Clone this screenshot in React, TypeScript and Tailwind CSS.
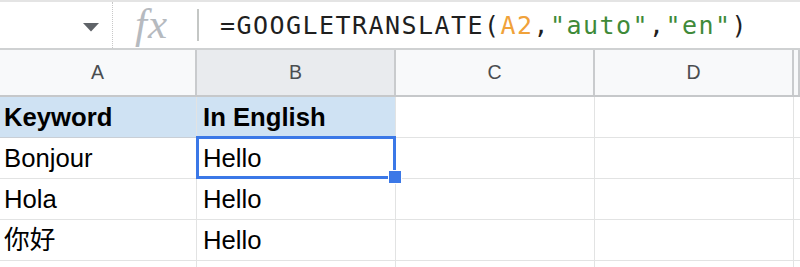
import React from "react";

const sans = { fontFamily: '"Liberation Sans", Arial, "Noto Sans CJK SC", sans-serif' };

export default function App() {
  const cols = ["w-[197px]", "w-[199px]", "w-[199px]", "w-[199px]", "flex-1"];
  const rows: { a: string; b: string; head?: boolean; sel?: boolean }[] = [
    { a: "Keyword", b: "In English", head: true },
    { a: "Bonjour", b: "Hello", sel: true },
    { a: "Hola", b: "Hello" },
    { a: "你好", b: "Hello" },
    { a: "", b: "" },
  ];
  return (
    <div className="w-[800px] h-[267px] overflow-hidden bg-white flex flex-col" style={sans}>
      {/* formula bar */}
      <div className="h-[50px] shrink-0 flex items-stretch border-t-[2px] border-b-[2px] border-t-[#e4e4e4] border-b-[#cfd1d2] bg-white">
        <div className="w-[113px] shrink-0 flex items-center justify-end pr-[13px] border-r border-dotted border-r-[#c8c8c8]">
          <svg width="16" height="9" viewBox="0 0 16 9" className="mt-[5px]">
            <path d="M0 0 L16 0 L8 8.5 Z" fill="#5f6368" />
          </svg>
        </div>
        <div className="w-[84px] shrink-0 flex items-center pl-[16px]">
          <span
            className="inline-block px-[6px] py-[2px] text-[43px] italic text-[#b6babf] tracking-[1px] leading-[46px] -mt-[2px]"
            style={{ fontFamily: '"Liberation Serif", "Times New Roman", serif' }}
          >
            fx
          </span>
        </div>
        <div className="w-[2px] shrink-0 bg-[#c4c7c5] my-[7px]" />
        <div
          className="flex items-center pl-[21px] text-[25px] tracking-[1.45px] text-[#1f1f1f] whitespace-pre pt-[2px]"
          style={{ fontFamily: '"DejaVu Sans Mono", Menlo, monospace' }}
        >
          <span>=GOOGLETRANSLATE(</span>
          <span className="text-[#f0a23a]">A2</span>
          <span>,</span>
          <span className="text-[#3f8a39]">"auto"</span>
          <span>,</span>
          <span className="text-[#3f8a39]">"en"</span>
          <span>)</span>
        </div>
      </div>

      {/* column headers */}
      <div className="h-[47px] shrink-0 flex border-b-[2px] border-b-[#c6c8ca] bg-[#f8f9fa]">
        {["A", "B", "C", "D", ""].map((l, i) => (
          <div
            key={i}
            className={`${cols[i]} shrink-0 flex items-center justify-center text-[19.5px] text-[#4a4d50] border-r-[2px] border-r-[#c9cbcd] ${
              i === 1 ? "bg-[#e9ebee] text-[#3c4043]" : ""
            }`}
          >
            {l}
          </div>
        ))}
      </div>

      {/* rows */}
      {rows.map((r, ri) => (
        <div key={ri} className="h-[41px] shrink-0 flex">
          {[r.a, r.b, "", "", ""].map((t, ci) => (
            <div
              key={ci}
              className={`${cols[ci]} shrink-0 relative flex items-center border-r border-b border-[#e2e3e3] text-[25.7px] text-black leading-[40px] whitespace-nowrap ${
                ci === 0 ? "pl-[4px]" : "pl-[6px]"
              } ${r.head && ci < 2 ? "bg-[#cfe2f3] font-bold border-b-[#c9cfd6]" : ""} ${
                r.sel && ci === 1 ? "z-10" : ""
              }`}
            >
              {t}
              {r.sel && ci === 1 && (
                <>
                  <div className="absolute left-[-1px] top-[-2px] w-[200px] h-[43px] border-[3px] border-[#3b78e7] pointer-events-none" />
                  <div className="absolute left-[191px] top-[32px] w-[14px] h-[14px] bg-[#3b78e7] border border-white" />
                </>
              )}
            </div>
          ))}
        </div>
      ))}
    </div>
  );
}
